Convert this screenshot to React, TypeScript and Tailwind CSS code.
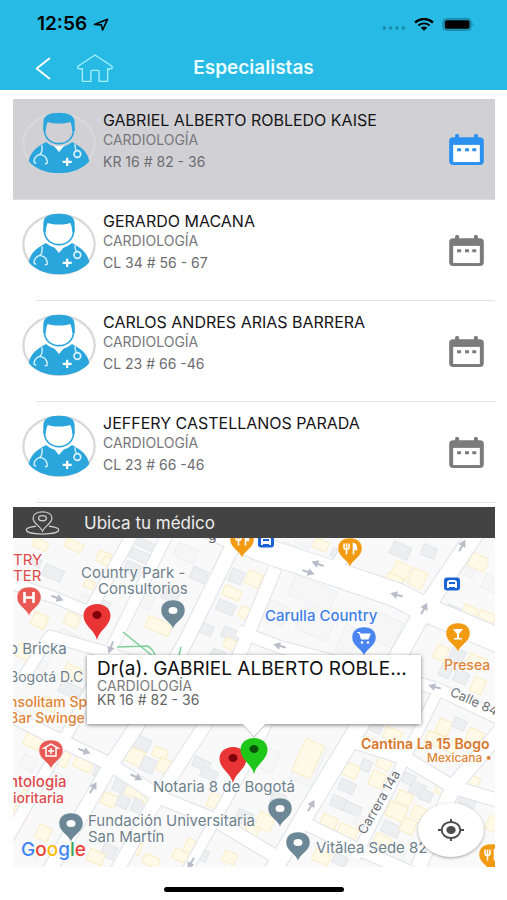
import React from "react";

type Specialist = {
  name: string;
  specialty: string;
  address: string;
  selected?: boolean;
};

const specialists: Specialist[] = [
  { name: "GABRIEL ALBERTO ROBLEDO KAISE", specialty: "CARDIOLOGÍA", address: "KR 16 # 82 - 36", selected: true },
  { name: "GERARDO MACANA", specialty: "CARDIOLOGÍA", address: "CL 34 # 56 - 67" },
  { name: "CARLOS ANDRES ARIAS BARRERA", specialty: "CARDIOLOGÍA", address: "CL 23 # 66 -46" },
  { name: "JEFFERY CASTELLANOS PARADA", specialty: "CARDIOLOGÍA", address: "CL 23 # 66 -46" },
];

function StatusBar() {
  return (
    <div className="flex h-12 items-center justify-between pl-[37px] pr-8">
      <div className="flex items-center gap-[6px]">
        <span className="text-[19px] font-semibold leading-6 text-black">12:56</span>
        <svg viewBox="0 0 48 40" className="h-[13px] w-4" fill="none" stroke="#000" strokeWidth="5" strokeLinejoin="round" aria-hidden="true">
          <path d="M4 20 44 4 29 37 25 21Z" />
        </svg>
      </div>
      <div className="flex items-center gap-2">
        <svg viewBox="0 0 70 12" className="mt-2 h-1 w-6" fill="#1b87a8" aria-hidden="true">
          <circle cx="6" cy="6" r="5" />
          <circle cx="25" cy="6" r="5" />
          <circle cx="44" cy="6" r="5" />
          <circle cx="63" cy="6" r="5" />
        </svg>
        <svg viewBox="0 0 60 38" className="h-[13px] w-5" fill="none" stroke="#000" aria-hidden="true">
          <path d="M3 13C19-1 41-1 57 13" strokeWidth="7" />
          <path d="M13 22C23 14 37 14 47 22" strokeWidth="6" />
          <path d="M20 29q10-8 20 0L30 38Z" fill="#000" stroke="none" />
        </svg>
        <svg viewBox="0 0 100 40" className="h-[13px] w-[33px]" aria-hidden="true">
          <rect x="2" y="2" width="87" height="36" rx="11" fill="#1f9dc2" stroke="#187f9e" strokeWidth="3" />
          <rect x="8" y="7" width="76" height="26" rx="6" fill="#000" />
          <path d="M93 14q6 6 0 12Z" fill="#187f9e" />
        </svg>
      </div>
    </div>
  );
}

function Header() {
  return (
    <header className="h-[90px] bg-[#27bae5]">
      <StatusBar />
      <div className="grid h-10 grid-cols-[1fr_auto_1fr] items-center">
        <div className="flex items-center gap-[26px] pl-[35px]">
          <button type="button" aria-label="Atrás">
            <svg viewBox="0 0 48 68" className="h-[23px] w-4" fill="none" stroke="#fff" strokeWidth="6" strokeLinecap="round" strokeLinejoin="round">
              <path d="M43 4 5 34 43 64" />
            </svg>
          </button>
          <button type="button" aria-label="Inicio">
            <svg viewBox="0 0 104 82" className="h-7 w-9" fill="none" stroke="#a5f1ff" strokeWidth="4" strokeLinejoin="round">
              <path d="M52 3 2 36v6q6 3 13 1v35q0 2 2 2h23V51q0-3 3-3h18q3 0 3 3v29h23q2 0 2-2V43q8 2 13-1v-6Z" />
            </svg>
          </button>
        </div>
        <h1 className="text-[19px] font-semibold leading-6 text-[#e9fbff]">Especialistas</h1>
      </div>
    </header>
  );
}

function DoctorAvatar() {
  return (
    <svg viewBox="0 0 222 186" className="h-[62px] w-[74px] shrink-0" aria-hidden="true">
      <ellipse cx="111" cy="94" rx="107" ry="89" fill="none" stroke="#d9d9db" strokeWidth="7" />
      <path d="M20 147C26 120 42 106 72 90 82 99 96 105 111 105S140 99 150 90C180 106 196 120 202 147 185 169 151 184 111 184S37 169 20 147Z" fill="#2aa6dd" />
      <path d="M94 100q17 6 34 0l-17 20Z" fill="#fff" />
      <path d="M67 44v8c0 26 19 43 44 43s44-17 44-43v-8" fill="none" stroke="#2aa6dd" strokeWidth="5" />
      <path d="M64 56V32C64 10 82 2 111 2s47 8 47 30v24l-7 2c-1-11-2-19-6-28-22 6-46 6-68 0-4 9-5 17-6 28Z" fill="#2aa6dd" />
      <g fill="none" stroke="#dff4fc" strokeWidth="4" strokeLinecap="round">
        <path d="M60 101q2 22-7 26-16 5-17 22 0 3 5 4m12-26q22 3 23 24 0 5-6 4" />
        <path d="M159 98q-1 12 5 18" />
      </g>
      <circle cx="166" cy="126" r="10" fill="#2aa6dd" stroke="#dff4fc" strokeWidth="5" />
      <path d="M132 137h7v9h10v7h-10v9h-7v-9h-10v-7h10Z" fill="#fff" />
    </svg>
  );
}

function CalendarIcon({ color }: { color: string }) {
  return (
    <svg viewBox="0 0 105 94" className="h-[31px] w-[35px]" aria-hidden="true">
      <path d="M18 4q0-4 6-4t6 4v6h45V4q0-4 6-4t6 4v6h6q12 0 12 11v62q0 11-12 11H12Q0 94 0 83V21Q0 10 12 10h6Z" fill={color} />
      <rect x="12" y="33" width="81" height="52" fill="#fff" />
      <path d="M24 43h12v9H24ZM48 43h12v9H48ZM70 43h12v9H70Z" fill={color} />
    </svg>
  );
}

function SpecialistRow({ person }: { person: Specialist }) {
  return (
    <li className={person.selected ? "bg-[#d1d0d5]" : "bg-white"}>
      <div className="flex h-[100px] pl-[9px] pr-[11px]">
        <div className="pt-[13px]">
          <DoctorAvatar />
        </div>
        <div className="min-w-0 flex-1 pl-[7px] pt-[11px]">
          <h2 className="truncate text-[16px] leading-5 text-[#151517]">{person.name}</h2>
          <p className="text-[14px] leading-5 text-[#77777b]">{person.specialty}</p>
          <p className="mt-[2px] text-[14px] leading-5 text-[#6d6d71]">{person.address}</p>
        </div>
        <button type="button" aria-label={`Agendar con ${person.name}`} className="self-center">
          <CalendarIcon color={person.selected ? "#2b91f0" : "#7b7b7b"} />
        </button>
      </div>
      <div className={person.selected ? "h-px bg-[#dcdcdf]" : "ml-[23px] h-px bg-[#e4e4e6]"} />
    </li>
  );
}

const roads: { d: string; w: number }[] = [
  { d: "M155 -5 99 109 62 182 -5 300", w: 11 },
  { d: "M226 -5 172 105 123 189 97 228 32 340", w: 14 },
  { d: "M262 30 225 120 190 190 143 262 100 340", w: 13 },
  { d: "M285 120 242 210 212 264 170 340", w: 10 },
  { d: "M345 -10 322 32", w: 12 },
  { d: "M466 -10 411 72 345 190 297 269 256 340", w: 17 },
  { d: "M427 149 392 220 342 320", w: 10 },
  { d: "M490 190 440 249 405 330", w: 15 },
  { d: "M-5 44 43 60 76 74 120 -5", w: 11 },
  { d: "M10 140 37 98 99 116 150 135", w: 11 },
  { d: "M225 93 267 109 422 150 490 182", w: 12 },
  { d: "M-5 176 40 199 97 226 148 260 200 281 262 318", w: 13 },
  { d: "M342 204 392 220 440 249 490 264", w: 13 },
  { d: "M293 286 342 310 400 335", w: 12 },
  { d: "M195 -12 250 12 305 30 384 57 411 71 490 104", w: 24 },
];

/* x, y, width, height, kind: y = shop, g = building, o = open lot */
const buildings: [number, number, number, number, "y" | "g" | "o"][] = [
  [20, 2, 15, 9, "y"], [52, 3, 18, 9, "y"], [84, 14, 13, 11, "y"], [30, 29, 20, 12, "g"], [18, 20, 10, 8, "g"],
  [117, 13, 20, 10, "g"], [124, 3, 19, 8, "g"], [112, 25, 15, 11, "g"], [90, 20, 12, 8, "y"], [71, 42, 10, 8, "y"],
  [66, 58, 14, 12, "o"], [178, 31, 16, 12, "g"], [162, 8, 22, 14, "o"], [150, 50, 16, 13, "g"], [122, 55, 18, 14, "o"],
  [83, 62, 13, 12, "g"], [52, 76, 14, 12, "y"], [19, 76, 15, 13, "y"], [46, 94, 18, 10, "o"], [133, 82, 25, 12, "y"],
  [217, 32, 13, 13, "g"], [233, 34, 15, 14, "y"], [210, 50, 18, 10, "y"], [204, 64, 18, 11, "g"], [226, 70, 14, 11, "y"],
  [186, 86, 14, 10, "g"], [209, 91, 18, 11, "g"], [211, 102, 17, 10, "y"], [198, 112, 13, 10, "g"],
  [241, 3, 12, 10, "g"], [269, 7, 18, 11, "o"], [301, 2, 14, 10, "y"], [318, 12, 15, 9, "g"], [283, -2, 16, 10, "o"],
  [378, 6, 19, 13, "g"], [380, 25, 16, 15, "y"], [373, 37, 17, 10, "y"], [397, 32, 15, 17, "y"], [409, 8, 14, 11, "g"],
  [456, 17, 18, 14, "y"], [447, 29, 14, 9, "o"], [470, 39, 20, 15, "o"], [433, 68, 13, 11, "g"], [448, 68, 14, 19, "y"], [464, 74, 16, 18, "y"],
  [277, 44, 45, 22, "o"], [286, 72, 34, 26, "o"], [358, 78, 28, 28, "o"], [252, 65, 22, 20, "o"], [327, 88, 16, 28, "o"],
  [422, 108, 12, 14, "y"], [437, 111, 14, 14, "g"], [455, 118, 18, 11, "y"], [427, 127, 11, 12, "g"], [441, 133, 14, 12, "g"], [459, 140, 12, 15, "y"],
  [4, 107, 16, 14, "y"], [20, 122, 14, 10, "o"], [51, 128, 17, 13, "y"], [46, 146, 22, 12, "g"], [29, 160, 15, 12, "y"],
  [12, 195, 23, 16, "y"], [8, 218, 15, 14, "o"], [62, 217, 18, 15, "y"], [43, 212, 13, 16, "y"], [81, 227, 14, 13, "g"],
  [37, 236, 17, 14, "o"], [8, 253, 12, 10, "y"], [0, 270, 15, 11, "y"], [24, 288, 13, 14, "y"], [8, 307, 18, 11, "o"],
  [121, 199, 16, 13, "g"], [113, 211, 18, 15, "y"], [128, 220, 14, 14, "g"], [140, 210, 14, 10, "y"], [145, 222, 17, 13, "y"],
  [112, 246, 19, 13, "y"], [101, 240, 12, 14, "g"], [89, 256, 15, 12, "y"], [104, 258, 12, 12, "g"], [119, 262, 14, 13, "g"], [132, 254, 14, 15, "y"],
  [89, 307, 14, 13, "g"], [75, 313, 16, 12, "y"], [59, 307, 13, 10, "o"], [112, 303, 16, 12, "y"], [130, 318, 16, 10, "y"],
  [180, 221, 17, 10, "g"], [188, 231, 16, 10, "g"], [160, 263, 14, 9, "y"], [195, 257, 15, 14, "y"], [172, 302, 14, 13, "y"], [181, 311, 14, 11, "g"], [160, 313, 16, 10, "y"],
  [210, 314, 13, 11, "y"], [223, 273, 16, 13, "g"], [244, 276, 16, 16, "y"], [232, 287, 13, 12, "y"], [258, 255, 14, 12, "g"],
  [284, 204, 23, 42, "o"], [285, 203, 20, 35, "y"], [248, 211, 16, 22, "o"],
  [345, 198, 14, 12, "y"], [355, 184, 14, 10, "g"], [371, 191, 17, 12, "y"], [348, 222, 10, 11, "g"], [330, 226, 15, 13, "y"], [326, 243, 16, 11, "g"],
  [318, 259, 15, 11, "g"], [331, 266, 17, 10, "g"], [308, 278, 16, 11, "y"], [325, 288, 19, 12, "y"], [357, 234, 14, 15, "y"], [364, 220, 14, 11, "y"],
  [342, 278, 11, 10, "o"], [390, 236, 12, 10, "g"], [397, 245, 15, 12, "g"], [407, 253, 12, 10, "g"], [384, 254, 15, 12, "y"], [374, 266, 19, 15, "y"],
  [369, 285, 18, 12, "g"], [388, 281, 14, 14, "y"], [361, 297, 16, 13, "y"], [376, 309, 16, 12, "o"], [399, 269, 14, 12, "y"], [423, 247, 14, 10, "y"],
  [424, 182, 13, 15, "y"], [413, 195, 15, 12, "y"], [440, 181, 13, 10, "g"], [454, 192, 15, 13, "y"], [430, 203, 14, 11, "y"], [463, 168, 14, 10, "o"],
  [453, 238, 12, 16, "y"], [446, 257, 17, 11, "g"], [467, 255, 15, 10, "y"], [474, 279, 12, 14, "y"], [300, 313, 17, 12, "y"], [320, 317, 14, 10, "g"],
];

const buildingFill = { y: "#fff9e8", g: "#edeef0", o: "#f6f6f6" };
const buildingLine = { y: "#faecc4", g: "#e3e5e9", o: "#eeeff1" };

function StreetArrow({ x, y, angle }: { x: number; y: number; angle: number }) {
  return (
    <g transform={`translate(${x} ${y}) rotate(${angle})`}>
      <path d="M-6-1H0V-4L7 0 0 4V1H-6Z" fill="#b9bdca" />
    </g>
  );
}

function PlacePin({ x, y, color, children }: { x: number; y: number; color: string; children?: React.ReactNode }) {
  return (
    <g transform={`translate(${x} ${y})`}>
      <path d="M0 0C-2-7-12-10-12-18.500-12-25-7-29 0-29S12-25 12-18.500C12-10 2-7 0 0Z" fill={color} stroke="#fff" strokeOpacity="0.6" strokeWidth="0.7" />
      {children ?? <ellipse cx="0" cy="-18.500" rx="4.500" ry="3.500" fill="#fff" />}
    </g>
  );
}

function DoctorMarker({ x, y, color, dot }: { x: number; y: number; color: string; dot: string }) {
  return (
    <g transform={`translate(${x} ${y})`}>
      <path d="M0 0C-2-10-13.500-14-13.500-24.500-13.500-31-8-36 0-36S13.500-31 13.500-24.500C13.500-14 2-10 0 0Z" fill={color} />
      <ellipse cx="0" cy="-25" rx="4.500" ry="4" fill={dot} />
    </g>
  );
}

function Cutlery() {
  return (
    <g transform="translate(0 -18.500)" fill="none" stroke="#fff" strokeWidth="1.600">
      <path d="M-6-5v4q0 2 2.500 2T-1-1v-4M-3.500-5V6" />
      <path d="M3.500 6V-5q3 1 3 6h-3" fill="#fff" />
    </g>
  );
}

function BusStop({ x, y }: { x: number; y: number }) {
  return (
    <g transform={`translate(${x} ${y})`}>
      <rect x="-8" y="-6.500" width="16" height="13" rx="3" fill="#1a63d8" />
      <path d="M-5 4V-1q0-3 3-3h4q3 0 3 3v5H3V3h-6v1Z" fill="#fff" />
      <path d="M-3-2h6v2h-6Z" fill="#1a63d8" />
    </g>
  );
}

function StreetMap() {
  return (
    <svg viewBox="0 0 482 329" preserveAspectRatio="xMinYMin slice" className="block h-full w-full" aria-hidden="true">
      <rect width="482" height="329" fill="#f9f9fa" />
      {buildings.map(([x, y, w, h, kind], i) => (
        <rect
          key={i}
          x={x}
          y={y}
          width={w}
          height={h}
          fill={buildingFill[kind]}
          stroke={buildingLine[kind]}
          transform={`rotate(24 ${x + w / 2} ${y + h / 2})`}
        />
      ))}
      <g fill="none" strokeLinejoin="round">
        {roads.map((r) => (
          <path key={r.d} d={r.d} stroke="#e0e2e9" strokeWidth={r.w + 2} />
        ))}
        {roads.map((r) => (
          <path key={r.d} d={r.d} stroke="#fff" strokeWidth={r.w} />
        ))}
        <path d="M110 94 142 120M104 109l30-1q6 2 9 12M168 109l-3 12" stroke="#7fcf98" strokeWidth="1.500" />
      </g>
      <StreetArrow x={44} y={60} angle={22} />
      <StreetArrow x={98} y={109} angle={110} />
      <StreetArrow x={305} y={26} angle={200} />
      <StreetArrow x={295} y={34} angle={18} />
      <StreetArrow x={384} y={57} angle={195} />
      <StreetArrow x={449} y={8} angle={-62} />
      <StreetArrow x={411} y={71} angle={-62} />
      <StreetArrow x={267} y={108} angle={195} />
      <StreetArrow x={422} y={149} angle={195} />
      <StreetArrow x={71} y={213} angle={22} />
      <StreetArrow x={123} y={239} angle={26} />
      <StreetArrow x={80} y={250} angle={-60} />
      <StreetArrow x={298} y={268} angle={-60} />
      <StreetArrow x={178} y={325} angle={120} />

      <PlacePin x={229} y={20} color="#f29a12"><Cutlery /></PlacePin>
      <BusStop x={253} y={3} />
      <PlacePin x={337} y={29} color="#f29a12"><Cutlery /></PlacePin>
      <BusStop x={439} y={46} />
      <PlacePin x={16} y={78} color="#ea5a55">
        <path d="M-4.500-24v11M4.500-24v11M-4.500-18.500h9" stroke="#fff" strokeWidth="2.600" fill="none" />
      </PlacePin>
      <PlacePin x={160} y={91} color="#6c8796" />
      <PlacePin x={445} y={114} color="#f29a12">
        <path d="M-5-23H5L1-18v4h3v1.500h-8V-14h3v-4Z" fill="#fff" />
      </PlacePin>
      <PlacePin x={351} y={118} color="#4a84ee">
        <path d="M-7-23.500h2.500l2 6.500h6.500l2-5h-9.500" fill="#fff" stroke="#fff" strokeWidth="1.200" strokeLinejoin="round" />
        <circle cx="-2" cy="-13.500" r="1.300" fill="#fff" />
        <circle cx="4" cy="-13.500" r="1.300" fill="#fff" />
      </PlacePin>
      <PlacePin x={38} y={231} color="#ea5a55">
        <path d="M-5-13v-8h-2l7-4 7 4h-2v8Z" fill="none" stroke="#fff" strokeWidth="1.500" />
        <path d="M0-21v6M-3-18h6" stroke="#fff" strokeWidth="1.500" />
      </PlacePin>
      <PlacePin x={58} y={304} color="#6c8796" />
      <PlacePin x={267} y={289} color="#6c8796" />
      <PlacePin x={285} y={323} color="#6c8796" />
      <PlacePin x={478} y={335} color="#f29a12"><Cutlery /></PlacePin>
      <DoctorMarker x={84} y={102} color="#e93535" dot="#7f0308" />
      <DoctorMarker x={220} y={245} color="#e93535" dot="#7f0308" />
    </svg>
  );
}

const mapLabels: { text: string; place: string }[] = [
  { text: "TRY", place: "left-0 top-[14px] text-[15px] text-[#dc4a4a]" },
  { text: "TER", place: "left-0 top-[30px] text-[15px] text-[#dc4a4a]" },
  { text: "Country Park -", place: "left-[68px] top-[27px] text-[15px] text-[#6d808b]" },
  { text: "Consultorios", place: "left-[85px] top-[43px] text-[15px] text-[#6d808b]" },
  { text: "Carulla Country", place: "left-[252px] top-[70px] text-[15px] font-medium text-[#3f7fe6]" },
  { text: "o Bricka", place: "-left-1 top-[103px] text-[15px] text-[#6d808b]" },
  { text: "Bogotá D.C", place: "-left-1 top-[131px] text-[14px] text-[#6d808b]" },
  { text: "nsolitam Sp", place: "-left-1 top-[156px] text-[14px] font-medium text-[#de8436]" },
  { text: "Bar Swinge", place: "-left-1 top-[172px] text-[14px] font-medium text-[#de8436]" },
  { text: "Presea", place: "left-[431px] top-[119px] text-[14px] font-medium text-[#de8436]" },
  { text: "Cantina La 15 Bogo", place: "left-[348px] top-[198px] text-[14px] font-semibold text-[#d9772a]" },
  { text: "Mexicana • S", place: "left-[414px] top-[212px] text-[12px] font-medium text-[#de8436]" },
  { text: "Notaria 8 de Bogotá", place: "left-[140px] top-[241px] text-[15px] text-[#6d808b]" },
  { text: "ntologia", place: "-left-1 top-[236px] text-[15px] font-medium text-[#dc4a4a]" },
  { text: "ioritaria", place: "left-0 top-[252px] text-[14px] font-medium text-[#dc4a4a]" },
  { text: "Fundación Universitaria", place: "left-[75px] top-[275px] text-[15px] text-[#6d808b]" },
  { text: "San Martín", place: "left-[75px] top-[291px] text-[15px] text-[#6d808b]" },
  { text: "Vitălea Sede 82", place: "left-[303px] top-[302px] text-[15px] text-[#6d808b]" },
  { text: "Calle 84", place: "left-[436px] top-[155px] rotate-[24deg] text-[13px] text-[#6b6f75]" },
  { text: "Carrera 14a", place: "left-[330px] top-[256px] rotate-[-60deg] text-[13px] text-[#6b6f75]" },
  { text: "g", place: "left-[195px] -top-[11px] text-[14px] text-[#55585c]" },
];

function MapPanel() {
  return (
    <section aria-label="Mapa" className="relative mx-3 h-[329px] overflow-hidden pl-px">
      <div className="relative h-full overflow-hidden">
        <StreetMap />
        {mapLabels.map((label) => (
          <span
            key={label.text}
            className={`absolute whitespace-nowrap leading-4 [text-shadow:0_0_2px_#fff,0_0_2px_#fff] ${label.place}`}
          >
            {label.text}
          </span>
        ))}
        <div className="absolute left-2 top-[300px] text-[19px] font-medium leading-6 [text-shadow:0_0_2px_#fff]">
          <span className="text-[#4285f4]">G</span>
          <span className="text-[#ea4335]">o</span>
          <span className="text-[#fbbc05]">o</span>
          <span className="text-[#4285f4]">g</span>
          <span className="text-[#34a853]">l</span>
          <span className="text-[#ea4335]">e</span>
        </div>

        <div className="absolute left-[74px] top-[117px] h-[69px] w-[334px] bg-white px-[10px] pt-1 shadow-[0_1px_4px_rgba(0,0,0,0.5)]">
          <p className="whitespace-nowrap text-[19px] leading-5 text-[#111]">Dr(a). GABRIEL ALBERTO ROBLE...</p>
          <p className="text-[14px] leading-[14px] text-[#7b7b7b]">CARDIOLOGÍA</p>
          <p className="text-[14px] leading-[14px] text-[#666]">KR 16 # 82 - 36</p>
        </div>
        <svg viewBox="0 0 40 52" className="absolute left-[221px] top-[185px] h-[52px] w-10" aria-hidden="true">
          <path d="M8 0 20 13 32 0Z" fill="#fff" />
          <path d="M8 1 20 14 32 1" fill="none" stroke="#c4c4c4" />
          <DoctorMarker x={20} y={51} color="#1fc71b" dot="#08520a" />
        </svg>

        <button
          type="button"
          aria-label="Mi ubicación"
          className="absolute right-[11px] top-[265px] flex h-[54px] w-[66px] items-center justify-center rounded-[50%] bg-white shadow-[0_1px_3px_rgba(0,0,0,0.35)]"
        >
          <svg viewBox="0 0 78 66" className="h-[22px] w-[26px]" fill="none" stroke="#4c4c4c">
            <ellipse cx="39" cy="33" rx="28" ry="24" strokeWidth="6" />
            <ellipse cx="39" cy="33" rx="14" ry="12" fill="#4c4c4c" stroke="none" />
            <path d="M39 0v11M39 55v11M0 33h12M66 33h12" strokeWidth="6" />
          </svg>
        </button>
      </div>
    </section>
  );
}

export default function App() {
  return (
    <div className="min-h-screen bg-white font-['Inter','Liberation_Sans',sans-serif]">
      <Header />
      <main>
        <ul className="ml-[13px] mr-3 pt-[9px]">
          {specialists.map((person) => (
            <SpecialistRow key={person.name} person={person} />
          ))}
        </ul>
        <div className="ml-[13px] mr-3 mt-1 flex h-[31px] items-center gap-6 bg-[#434343] pl-3">
          <svg viewBox="0 0 106 74" className="h-6 w-[35px]" fill="none" stroke="#c9c9c9" strokeWidth="4" aria-hidden="true">
            <path d="M53 62C46 46 24 38 24 22 24 10 36 3 53 3s29 7 29 19c0 16-22 24-29 40Z" />
            <ellipse cx="53" cy="22" rx="12" ry="8" />
            <path d="M33 47C15 49 3 53 3 58c0 8 22 13 50 13s50-5 50-13c0-5-12-9-30-11" />
          </svg>
          <h2 className="text-[17px] leading-5 text-[#ececec]">Ubica tu médico</h2>
        </div>
        <MapPanel />
      </main>
      <div className="flex justify-center pt-5">
        <div className="h-[5px] w-[180px] rounded-full bg-black" />
      </div>
    </div>
  );
}
